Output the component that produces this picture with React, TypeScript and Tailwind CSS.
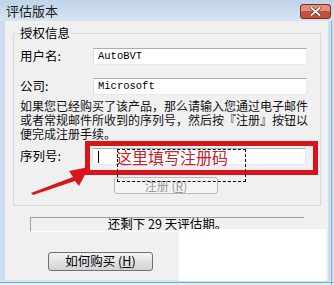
import React from 'react';

const cjk = { fontFamily: '"Noto Sans CJK SC", "Noto Sans", sans-serif' };

const TextBox: React.FC<{ value?: string; caret?: boolean }> = ({ value, caret }) => (
  <div className="w-[214px] h-[17px] bg-white border border-[#e3e9ef] border-t-[#abadb3] border-l-[#dbdfe6] flex items-center pl-[4px]">
    {caret && <span className="w-px h-[12px] bg-black ml-[1px]" />}
    {value && (
      <span className="text-[10.5px] leading-none text-black" style={{ fontFamily: '"Liberation Mono", monospace' }}>
        {value}
      </span>
    )}
  </div>
);

const App: React.FC = () => {
  return (
    <div className="w-[334px] h-[285px] relative overflow-hidden bg-[#cfdeee] text-black" style={cjk}>
      {/* Title bar */}
      <div className="h-[21px] flex items-center pl-[6px] bg-gradient-to-b from-[#bfd3e9] to-[#d6e4f2]">
        <span className="text-[13px] leading-none text-[#1e1e1e]">评估版本</span>
        <div className="ml-auto mr-[3px] mt-[1px] w-[31px] h-[15px] shrink-0 rounded-[3px] border border-[#7a2e22] bg-[#c4503c] shadow-[inset_0_6px_0_#df8f7c] flex items-center justify-center">
          <svg width="11" height="9" viewBox="0 0 11 9">
            <path d="M1.5 1 L9.5 8 M9.5 1 L1.5 8" stroke="#6a2a20" strokeWidth="3.2" strokeLinecap="square" />
            <path d="M1.5 1 L9.5 8 M9.5 1 L1.5 8" stroke="#ffffff" strokeWidth="1.8" strokeLinecap="square" />
          </svg>
        </div>
      </div>

      {/* Client area */}
      <div className="ml-[5px] mr-[6px] h-[259px] bg-[#f0f0f0] flex flex-col">
        {/* Group box */}
        <div className="relative mt-[12px] ml-[8px] mr-[7px] border border-[#d6dade] pl-[6px] pb-[11px]">
          <span className="absolute left-[5px] -top-[9px] px-[1px] bg-[#f0f0f0] text-[12.5px] leading-[16px]">授权信息</span>

          <div className="mt-[14px] flex items-center h-[17px]">
            <span className="w-[73px] text-[12.5px] leading-none">用户名:</span>
            <TextBox value="AutoBVT" />
          </div>
          <div className="mt-[13px] flex items-center h-[17px]">
            <span className="w-[73px] text-[12.5px] leading-none">公司:</span>
            <TextBox value="Microsoft" />
          </div>

          <div className="mt-[4px] flex flex-col whitespace-nowrap text-[12px] leading-[14px] text-[#111]">
            <span className="h-[14px]">如果您已经购买了该产品，那么请输入您通过电子邮件</span>
            <span className="h-[14px]">或者常规邮件所收到的序列号，然后按『注册』按钮以</span>
            <span className="h-[14px]">便完成注册手续。</span>
          </div>

          <div className="mt-[7px] flex items-center h-[17px]">
            <span className="w-[72px] text-[12.5px] leading-none">序列号:</span>
            <TextBox caret />
          </div>

          <div className="mt-[12px] ml-[94px] w-[104px] h-[17px] rounded-[3px] border border-[#b5b9bd] bg-[#f4f4f4] flex items-center justify-center">
            <span className="text-[12px] leading-none text-[#9a9a9a]">注册 (<span className="underline">R</span>)</span>
          </div>
        </div>

        {/* Status */}
        <div className="mt-[11px] ml-[25px] w-[274px] h-[15px] border-t border-l border-[#a0a0a0] border-b border-b-[#ffffff] flex items-center justify-center">
          <span className="text-[12.5px] leading-none">还剩下 29 天评估期。</span>
        </div>

        {/* Buy */}
        <button className="mt-[20px] ml-[43px] w-[105px] h-[19px] rounded-[3px] border border-[#707070] bg-gradient-to-b from-[#f3f3f3] to-[#d3d3d3] flex items-center justify-center">
          <span className="text-[12.5px] leading-none">如何购买 (<span className="underline">H</span>)</span>
        </button>
      </div>

      {/* Bottom frame */}
      <div className="h-[5px] flex flex-col">
        <div className="h-[2px] bg-[#d6e3ef]" />
        <div className="h-[1px] bg-[#5fb3c6]" />
        <div className="h-[2px] bg-[#e6eef5]" />
      </div>
      <div className="absolute right-[2px] top-[21px] bottom-0 w-px bg-[#7fb3d6]" />

      {/* Annotation: red box */}
      <div className="absolute left-[85px] top-[141px] w-[233px] h-[34px] border-[5px] border-[#d8141c]" />
      <span className="absolute left-[116px] top-[147px] text-[16px] leading-[20px] text-[#c8232b]">这里填写注册码</span>
      <div className="absolute left-[117px] top-[149px] w-[129px] h-[33px] border border-dashed border-black" />

      {/* Annotation: arrow */}
      <svg className="absolute left-0 top-0" width="334" height="285" viewBox="0 0 334 285">
        <polygon points="31,193 73,177 69,171 89,167 79,186 75,181 33,195" fill="#d8141c" />
      </svg>

      {/* White patch */}
      <div className="absolute left-[179px] top-[229px] w-[147px] h-[52px] bg-white" />
    </div>
  );
};

export default App;
